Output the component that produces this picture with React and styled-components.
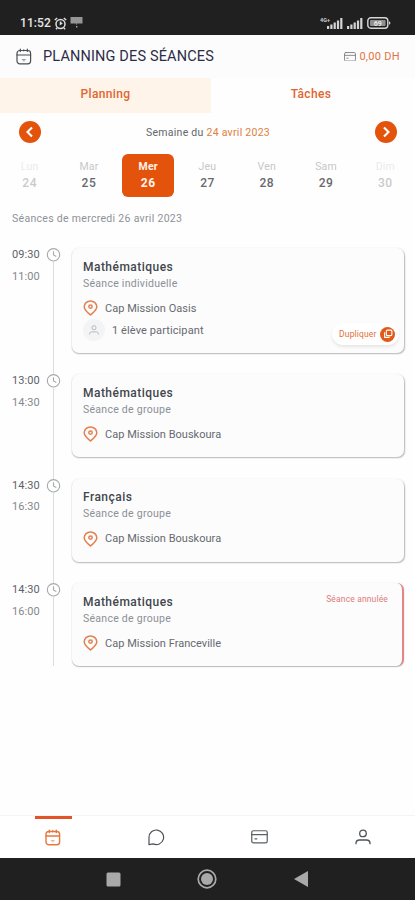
import styled, { createGlobalStyle } from "styled-components";

const GlobalStyle = createGlobalStyle`
  * {
    box-sizing: border-box;
  }
  body {
    margin: 0;
    background-color: #ffffff;
    font-family: Roboto, "Liberation Sans", sans-serif;
  }
  svg {
    display: block;
    flex-shrink: 0;
  }
`;

const Screen = styled.div`
  display: flex;
  flex-direction: column;
  width: 415px;
  height: 900px;
  overflow: hidden;
  background-color: #fefefe;
`;

const StatusBar = styled.div`
  display: flex;
  align-items: center;
  justify-content: space-between;
  height: 35px;
  padding: 11px 24px 0 20px;
  background-color: #202020;
`;

const StatusGroup = styled.div`
  display: flex;
  align-items: center;
  gap: 3px;
`;

const Clock = styled.span`
  font-size: 12px;
  font-weight: 500;
  line-height: 14px;
  letter-spacing: 0.1px;
  color: #e6e6e6;
`;

const Header = styled.header`
  display: flex;
  align-items: center;
  height: 43px;
  padding: 0 15px 0 16px;
  background-color: #fcfcfc;
`;

const Title = styled.h1`
  flex: 1;
  margin: 0 0 0 11px;
  font-size: 14.5px;
  font-weight: 400;
  line-height: 18px;
  letter-spacing: 0.15px;
  color: #2c2c48;
`;

const Balance = styled.span`
  margin-left: 3px;
  font-size: 11px;
  line-height: 14px;
  letter-spacing: 0.3px;
  color: #df7442;
`;

const Tabs = styled.div`
  display: grid;
  grid-template-columns: 211px 1fr;
  height: 35px;
`;

const Tab = styled.div`
  display: flex;
  align-items: center;
  justify-content: center;
  padding-bottom: 3px;
  padding-right: ${(props) => (props.$active ? 0 : 4)}px;
  font-size: 12px;
  font-weight: 500;
  letter-spacing: 0.35px;
  color: #e0662f;
  background-color: ${(props) => (props.$active ? "#fff4e9" : "#fefefe")};
`;

const WeekRow = styled.div`
  display: flex;
  align-items: center;
  justify-content: space-between;
  height: 38px;
  padding: 0 18px 0 19px;
`;

const RoundButton = styled.button`
  display: flex;
  align-items: center;
  justify-content: center;
  width: 22px;
  height: 22px;
  padding: 0;
  border: none;
  border-radius: 50%;
  background-color: #e4530b;
`;

const WeekLabel = styled.span`
  font-size: 10.5px;
  letter-spacing: 0.27px;
  color: #62666c;
  span {
    color: #e08040;
  }
`;

const Days = styled.div`
  display: grid;
  grid-template-columns: repeat(7, 1fr);
  justify-items: center;
  height: 47px;
  padding-top: 3px;
`;

const Day = styled.div`
  display: flex;
  flex-direction: column;
  align-items: center;
  width: 52px;
  height: 43px;
  padding-top: 5px;
  border-radius: 6px;
  opacity: ${(props) => (props.$faded ? 0.35 : 1)};
  background-color: ${(props) => (props.$active ? "#e4530b" : "transparent")};
`;

const DayName = styled.span`
  font-size: 10.5px;
  font-weight: ${(props) => (props.$active ? 700 : 400)};
  line-height: 15px;
  letter-spacing: 0.2px;
  color: ${(props) => (props.$active ? "#fff3ea" : "#c6c7c9")};
`;

const DayNumber = styled.span`
  font-size: 12px;
  font-weight: ${(props) => (props.$active ? 700 : 500)};
  line-height: 18px;
  letter-spacing: 0.5px;
  color: ${(props) => (props.$active ? "#fff3ea" : "#66696d")};
`;

const DateLabel = styled.p`
  margin: 14px 0 0 12px;
  font-size: 10.5px;
  line-height: 14px;
  letter-spacing: 0.3px;
  color: #8d9299;
`;

const Sessions = styled.div`
  flex: 1;
  padding: 22px 11px 0 12px;
`;

const Session = styled.div`
  display: flex;
`;

const Times = styled.div`
  width: 34px;
  padding-top: 1px;
  font-size: 11px;
  line-height: 12px;
  letter-spacing: 0.1px;
  color: #84888d;
  div:first-child {
    margin-bottom: 9.5px;
    color: #5e6266;
  }
`;

const Rail = styled.div`
  display: flex;
  flex-direction: column;
  align-items: center;
  width: 15px;
`;

const RailLine = styled.div`
  flex: 1;
  width: 1.5px;
  background-color: #dcdddd;
`;

const Card = styled.div`
  position: relative;
  flex: 1;
  height: ${(props) => (props.$tall ? 105 : 83.3)}px;
  margin: 0 0 ${(props) => (props.$last ? 0 : 21.2)}px 10.5px;
  padding: 10.5px 12px 0 11.5px;
  border-radius: 7px;
  background-color: #fcfcfc;
  border-right: ${(props) => (props.$cancelled ? "2px solid #e58585" : "none")};
  box-shadow: ${(props) =>
    props.$cancelled
      ? "0 1px 1px #b8b8b8, 0 0 2px #eeeeee"
      : "0.5px 1px 1.5px #b8b8b8, 0 0 2px #eeeeee"};
`;

const Subject = styled.div`
  font-size: 12px;
  font-weight: 500;
  line-height: 17px;
  letter-spacing: 0.47px;
  color: #42464d;
`;

const Kind = styled.div`
  font-size: 10.5px;
  line-height: 15px;
  letter-spacing: 0.27px;
  color: #8b9096;
`;

const Detail = styled.div`
  display: flex;
  align-items: center;
  gap: 7px;
  height: 16px;
  margin-top: ${(props) => (props.$first ? 9.5 : 6)}px;
  font-size: 11px;
  letter-spacing: ${(props) => (props.$first ? 0.02 : 0.1)}px;
  color: #666a70;
`;

const Avatar = styled.div`
  display: flex;
  align-items: center;
  justify-content: center;
  width: 22px;
  height: 22px;
  border-radius: 50%;
  background-color: #f3f4f5;
`;

const Duplicate = styled.button`
  position: absolute;
  right: 5px;
  bottom: 8px;
  display: flex;
  align-items: center;
  gap: 3.5px;
  height: 22px;
  padding: 0 4px 0 7px;
  border: none;
  border-radius: 11px;
  background-color: #ffffff;
  box-shadow: 0 2px 3px #e6e6e6;
  font-family: inherit;
  font-size: 8.5px;
  letter-spacing: 0.15px;
  color: #e0703a;
`;

const CopyBadge = styled.span`
  display: flex;
  align-items: center;
  justify-content: center;
  width: 15px;
  height: 15px;
  border-radius: 50%;
  background-color: #e05a18;
`;

const Cancelled = styled.span`
  position: absolute;
  top: 11px;
  right: 14px;
  font-size: 8.5px;
  line-height: 11px;
  letter-spacing: 0.15px;
  color: #df7b7b;
`;

const BottomNav = styled.nav`
  display: grid;
  grid-template-columns: repeat(4, 1fr);
  height: 43px;
  padding-left: 1.5px;
  border-top: 1px solid #f4f4f4;
  background-color: #ffffff;
`;

const NavItem = styled.div`
  display: flex;
  flex-direction: column;
  align-items: center;
`;

const NavMarker = styled.div`
  width: 37px;
  height: 3px;
  background-color: ${(props) => (props.$active ? "#e2532a" : "transparent")};
`;

const NavIcon = styled.div`
  display: flex;
  align-items: center;
  height: 36px;
`;

const SystemBar = styled.div`
  display: flex;
  align-items: center;
  height: 42px;
  padding-left: 105.5px;
  gap: 76.5px;
  background-color: #202020;
`;

const AlarmIcon = () => (
  <svg width="13" height="13" viewBox="0 0 13 13" fill="none" stroke="#dedede" strokeWidth="1.5">
    <circle cx="6.5" cy="7" r="4.5" />
    <path d="M6.5 4.5V7.2L8.3 6M.8 3 3.2 1M12.2 3 9.8 1M3 11l-1 1.3M10 11l1 1.3" />
  </svg>
);

const ScreenIcon = () => (
  <svg width="13" height="12" viewBox="0 0 13 12">
    <rect x=".5" y="0" width="12" height="6.5" fill="#969696" />
    <path d="M6 6.5h1v1H6zM6 9h1.4v1.5H6z" fill="#aaa" />
  </svg>
);

const Signal = () => (
  <svg width="17" height="11" viewBox="0 0 17 11" fill="#d4d4d4">
    <rect x="0" y="8" width="2.2" height="3" />
    <rect x="3.3" y="6.5" width="2.2" height="4.5" />
    <rect x="6.6" y="4.5" width="2.2" height="6.5" />
    <rect x="9.9" y="2.5" width="2.2" height="8.5" />
    <rect x="13.2" y="0" width="2.2" height="11" />
  </svg>
);

const Network = styled.span`
  align-self: flex-start;
  margin-right: -6px;
  font-size: 5.5px;
  font-weight: 700;
  line-height: 6px;
  color: #d0d0d0;
`;

const Battery = () => (
  <svg width="24" height="12" viewBox="0 0 24 12">
    <rect x=".8" y=".8" width="20" height="10.4" rx="3" fill="none" stroke="#d6d6d6" strokeWidth="1.4" />
    <rect x="3" y="3" width="15.6" height="6" rx="1" fill="#8f8f8f" />
    <text x="10.8" y="8.6" textAnchor="middle" fontSize="7" fontWeight="700" fill="#e8e8e8">
      69
    </text>
    <path d="M22 4v4l1.6-2z" fill="#d6d6d6" />
  </svg>
);

const CalendarIcon = ({ color, width = 1.2 }) => (
  <svg width="16" height="17" viewBox="0 0 16 17" fill="none" stroke={color} strokeWidth={width} strokeLinecap="round">
    <rect x="1" y="2.5" width="13.6" height="13.3" rx="2.8" />
    <path d="M1 7h13.6M4.3 1.2v2.3M11.3 1.2v2.3" />
    <path d="M7.8 1.8v1" />
    <path d="M6.3 11.5h3M7.2 12.8h1.2" strokeWidth=".8" opacity=".7" />
  </svg>
);

const CardIcon = ({ size, color }) => (
  <svg width={size} height={size * 0.8} viewBox="0 0 18 14.4" fill="none" stroke={color} strokeWidth="1.3" strokeLinecap="round">
    <rect x=".8" y=".8" width="16.4" height="12.8" rx="1.8" />
    <path d="M1 5h16M4.2 9.3h2" />
  </svg>
);

const Chevron = ({ d }) => (
  <svg width="12" height="12" viewBox="0 0 12 12" fill="none" stroke="#fff" strokeWidth="2.1">
    <path d={d} />
  </svg>
);

const ClockIcon = () => (
  <svg width="15" height="14" viewBox="0 0 15 14" fill="none" stroke="#a6a9ac" strokeWidth="1.1">
    <circle cx="7.5" cy="6.8" r="6.2" />
    <path d="M7.5 3.2v3.8l2.8 1.4" />
  </svg>
);

const PinIcon = () => (
  <svg width="15" height="16" viewBox="0 0 15 16" fill="none" stroke="#e28150" strokeWidth="1.5">
    <path d="M7.5 15C4.4 12.4 1.2 10 1.2 6.8a6.3 5.9 0 0 1 12.6 0C13.8 10 10.6 12.4 7.5 15Z" />
    <circle cx="7.5" cy="6.6" r="1.7" />
  </svg>
);

const PersonIcon = ({ size, color }) => (
  <svg width={size} height={size} viewBox="0 0 16 16" fill="none" stroke={color} strokeWidth="1.3">
    <circle cx="8" cy="4.4" r="3.3" />
    <path d="M1 15.2v-1c0-2 1.5-3.2 3.5-3.2h7c2 0 3.5 1.2 3.5 3.2v1" />
  </svg>
);

const ChatIcon = () => (
  <svg width="17" height="17" viewBox="0 0 17 17" fill="none" stroke="#4e5157" strokeWidth="1.2" strokeLinejoin="round">
    <path d="M1 15.6V8.3a7.3 7.3 0 1 1 4.2 6.6L1 15.6Z" />
  </svg>
);

const days = [
  { name: "Lun", number: 24, faded: true },
  { name: "Mar", number: 25 },
  { name: "Mer", number: 26, active: true },
  { name: "Jeu", number: 27 },
  { name: "Ven", number: 28 },
  { name: "Sam", number: 29 },
  { name: "Dim", number: 30, faded: true },
];

const sessions = [
  {
    start: "09:30",
    end: "11:00",
    subject: "Mathématiques",
    kind: "Séance individuelle",
    place: "Cap Mission Oasis",
    students: "1 élève participant",
  },
  {
    start: "13:00",
    end: "14:30",
    subject: "Mathématiques",
    kind: "Séance de groupe",
    place: "Cap Mission Bouskoura",
  },
  {
    start: "14:30",
    end: "16:30",
    subject: "Français",
    kind: "Séance de groupe",
    place: "Cap Mission Bouskoura",
  },
  {
    start: "14:30",
    end: "16:00",
    subject: "Mathématiques",
    kind: "Séance de groupe",
    place: "Cap Mission Franceville",
    cancelled: true,
  },
];

const navIcons = [
  <CalendarIcon color="#e4793f" width={1.4} />,
  <ChatIcon />,
  <CardIcon size={17} color="#5b6063" />,
  <PersonIcon size={16} color="#4e5357" />,
];

const App = () => {
  return (
    <>
      <GlobalStyle />
      <Screen>
        <StatusBar>
          <StatusGroup>
            <Clock>11:52</Clock>
            <AlarmIcon />
            <ScreenIcon />
          </StatusGroup>
          <StatusGroup>
            <Network>4G+</Network>
            <Signal />
            <Signal />
            <Battery />
          </StatusGroup>
        </StatusBar>
        <Header>
          <CalendarIcon color="#4b4d55" />
          <Title>PLANNING DES SÉANCES</Title>
          <CardIcon size={12} color="#777a80" />
          <Balance>0,00 DH</Balance>
        </Header>
        <Tabs>
          <Tab $active>Planning</Tab>
          <Tab>Tâches</Tab>
        </Tabs>
        <WeekRow>
          <RoundButton>
            <Chevron d="M8 1.5 3.5 6 8 10.5" />
          </RoundButton>
          <WeekLabel>
            Semaine du <span>24 avril 2023</span>
          </WeekLabel>
          <RoundButton>
            <Chevron d="M4 1.5 8.5 6 4 10.5" />
          </RoundButton>
        </WeekRow>
        <Days>
          {days.map((day) => (
            <Day key={day.number} $active={day.active} $faded={day.faded}>
              <DayName $active={day.active}>{day.name}</DayName>
              <DayNumber $active={day.active}>{day.number}</DayNumber>
            </Day>
          ))}
        </Days>
        <DateLabel>Séances de mercredi 26 avril 2023</DateLabel>
        <Sessions>
          {sessions.map((session, index) => (
            <Session key={index}>
              <Times>
                <div>{session.start}</div>
                <div>{session.end}</div>
              </Times>
              <Rail>
                <ClockIcon />
                <RailLine />
              </Rail>
              <Card
                $tall={Boolean(session.students)}
                $cancelled={session.cancelled}
                $last={index === sessions.length - 1}
              >
                <Subject>{session.subject}</Subject>
                <Kind>{session.kind}</Kind>
                <Detail $first>
                  <PinIcon />
                  {session.place}
                </Detail>
                {session.students && (
                  <>
                    <Detail>
                      <Avatar>
                        <PersonIcon size={10} color="#a9acb0" />
                      </Avatar>
                      {session.students}
                    </Detail>
                    <Duplicate>
                      Dupliquer
                      <CopyBadge>
                        <svg width="10" height="10" viewBox="0 0 9 9" fill="none" stroke="#fff" strokeWidth="1">
                          <rect x="3" y="1" width="5" height="5" rx="1" />
                          <path d="M1.5 3v4.5H6" />
                        </svg>
                      </CopyBadge>
                    </Duplicate>
                  </>
                )}
                {session.cancelled && <Cancelled>Séance annulée</Cancelled>}
              </Card>
            </Session>
          ))}
        </Sessions>
        <BottomNav>
          {navIcons.map((icon, index) => (
            <NavItem key={index}>
              <NavMarker $active={index === 0} />
              <NavIcon>{icon}</NavIcon>
            </NavItem>
          ))}
        </BottomNav>
        <SystemBar>
          <svg width="15" height="15" viewBox="0 0 15 15">
            <rect x=".5" y=".5" width="14" height="14" rx="1.5" fill="#a9a9a9" />
          </svg>
          <svg width="20" height="20" viewBox="0 0 20 20">
            <circle cx="10" cy="10" r="8.8" fill="none" stroke="#a9a9a9" strokeWidth="1.7" />
            <circle cx="10" cy="10" r="6" fill="#a9a9a9" />
          </svg>
          <svg width="15" height="16" viewBox="0 0 15 16">
            <path d="M0 8 14 0v16Z" fill="#a9a9a9" />
          </svg>
        </SystemBar>
      </Screen>
    </>
  );
};

export default App;
